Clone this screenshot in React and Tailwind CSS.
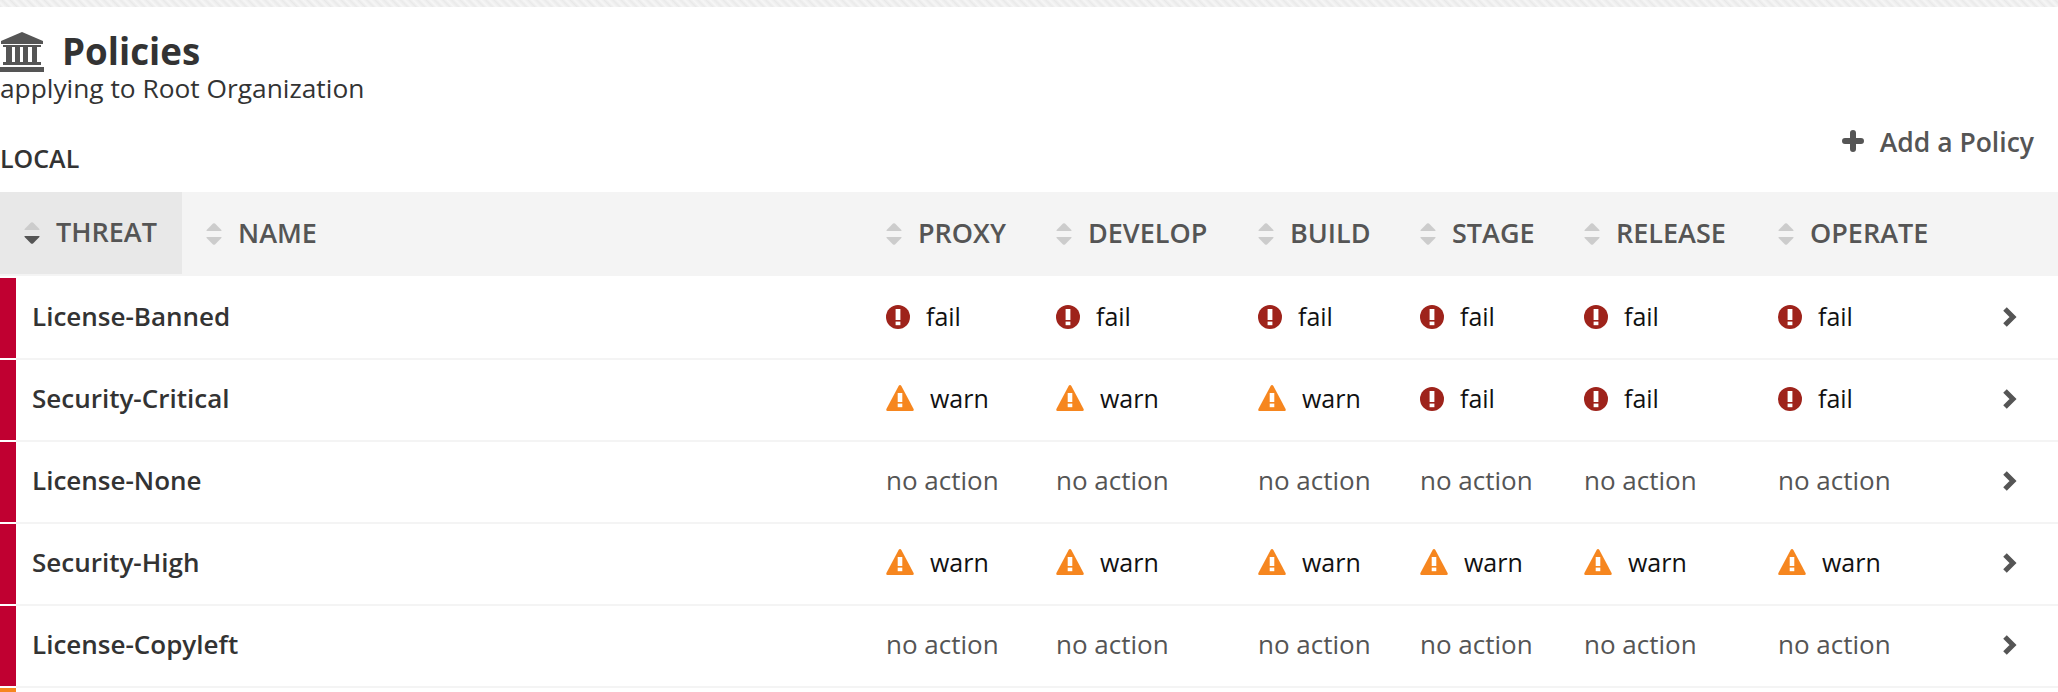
import React from "react";

const cols = "grid grid-cols-[182px_680px_170px_202px_162px_164px_194px_222px_82px]";

function Sort({ active }) {
  return (
    <svg width="16" height="22" viewBox="0 0 16 22" className="shrink-0">
      <path d="M7 .6 Q8 0 9 .6 L15.4 7 Q16 8 15 8 H1 Q0 8 .6 7 Z" fill="#cccccc" />
      <path d="M1 14 H15 Q16 14 15.4 15 L9 21.4 Q8 22 7 21.4 L.6 15 Q0 14 1 14 Z" fill={active ? "#555555" : "#cccccc"} />
    </svg>
  );
}

function Fail() {
  return (
    <span className="flex items-center gap-[16px] text-[25px] text-[#111111]">
      <svg width="24" height="24" viewBox="0 0 24 24" className="shrink-0">
        <circle cx="12" cy="12" r="12" fill="#9e231b" />
        <rect x="9.6" y="4" width="4.8" height="11" fill="#fff" />
        <rect x="9.6" y="16.6" width="4.8" height="3.6" fill="#fff" />
      </svg>
      fail
    </span>
  );
}

function Warn() {
  return (
    <span className="flex items-center gap-[16px] text-[25px] text-[#111111]">
      <svg width="28" height="26" viewBox="0 0 28 26" className="shrink-0 mb-[2px]">
        <path d="M14 0 C14.6 0 15 .4 15.4 1 L27.6 24 C28 25 27.6 26 26.6 26 H1.4 C.4 26 0 25 .4 24 L12.6 1 C13 .4 13.4 0 14 0 Z" fill="#f6861f" />
        <rect x="11.7" y="8" width="4.6" height="9" fill="#fff" />
        <rect x="11.7" y="18.6" width="4.6" height="3.6" fill="#fff" />
      </svg>
      warn
    </span>
  );
}

function None() {
  return <span className="text-[26px] text-[#555555]">no action</span>;
}

function Header({ label, active, className = "" }) {
  return (
    <div className={`flex items-center gap-[16px] pl-[24px] ${className}`}>
      <Sort active={active} />
      <span className="-mt-[2px]">{label}</span>
    </div>
  );
}

function Row({ name, cells }) {
  return (
    <div className={`${cols} h-[82px]`}>
      <div className="col-span-2 flex">
        <div className="w-[16px] h-[80px] bg-[#c00031] shrink-0" />
        <div className="flex-1 flex items-center pl-[16px] pb-[4px] h-[82px] border-b-2 border-[#f4f4f4] text-[26px] font-semibold text-[#333333]">
          {name}
        </div>
      </div>
      {cells.map((c, i) => (
        <div key={i} className="flex items-center pl-[24px] pb-[3px] border-b-2 border-[#f4f4f4]">
          {c === "fail" ? <Fail /> : c === "warn" ? <Warn /> : <None />}
        </div>
      ))}
      <div className="flex items-center pl-[26px] pb-[3px] border-b-2 border-[#f4f4f4]">
        <svg width="15" height="22" viewBox="0 0 15 22">
          <path d="M3 3 L11 11 L3 19" fill="none" stroke="#555555" strokeWidth="5" />
        </svg>
      </div>
    </div>
  );
}

const F = "fail", W = "warn", N = "none";
const rows = [
  ["License-Banned", [F, F, F, F, F, F]],
  ["Security-Critical", [W, W, W, F, F, F]],
  ["License-None", [N, N, N, N, N, N]],
  ["Security-High", [W, W, W, W, W, W]],
  ["License-Copyleft", [N, N, N, N, N, N]],
];

export default function App() {
  return (
    <div className="w-[2058px] h-[692px] overflow-hidden bg-white font-['Open_Sans','Lato',sans-serif]">
      <div className="h-[7px] bg-[#eeeeee] bg-[repeating-linear-gradient(45deg,#e8e8e8_0px,#f6f6f6_3px,#ebebeb_6px)]" />
      <div className="flex justify-between h-[185px]">
        <div>
          <div className="flex items-center gap-[18px] mt-[25px] h-[40px]">
            <svg width="44" height="40" viewBox="0 0 44 40" className="shrink-0">
              <path d="M22 0 L43 9 V12 H1 V9 Z" fill="#555555" />
              <rect x="3" y="13" width="38" height="2" fill="#555555" />
              <rect x="6" y="15" width="6" height="15" fill="#555555" />
              <rect x="15" y="15" width="5" height="15" fill="#555555" />
              <rect x="23" y="15" width="5" height="15" fill="#555555" />
              <rect x="32" y="15" width="5" height="15" fill="#555555" />
              <rect x="3" y="30" width="38" height="3" fill="#555555" />
              <rect x="0" y="35" width="44" height="5" fill="#555555" />
            </svg>
            <span className="text-[36.7px] font-bold text-[#333333] leading-none -mt-[2px]">Policies</span>
          </div>
          <div className="text-[26.3px] text-[#333333] leading-[30px] mt-[1px]">applying to Root Organization</div>
          <div className="text-[25px] font-semibold text-[#333333] leading-[30px] mt-[40px]">LOCAL</div>
        </div>
        <div className="flex items-start mt-[123px] mr-[24px] gap-[16px] text-[26.5px] font-semibold text-[#555555]">
          <svg width="22" height="22" viewBox="0 0 22 22">
            <path d="M11 3 V19 M3 11 H19" stroke="#555555" strokeWidth="6" strokeLinecap="round" />
          </svg>
          <span className="leading-[30px] -mt-[3px]">Add a Policy</span>
        </div>
      </div>
      <div className={`${cols} h-[84px] bg-[#f4f4f4] text-[27px] font-semibold text-[#555555]`}>
        <Header label="THREAT" active className="bg-[#e8e8e8] h-[82px]" />
        <Header label="NAME" />
        <Header label="PROXY" />
        <Header label="DEVELOP" />
        <Header label="BUILD" />
        <Header label="STAGE" />
        <Header label="RELEASE" />
        <Header label="OPERATE" />
      </div>
      <div className="pt-[2px]">
        {rows.map(([n, c]) => (
          <Row key={n} name={n} cells={c} />
        ))}
        <div className="w-[16px] h-[6px] bg-[#f6861f]" />
      </div>
    </div>
  );
}
